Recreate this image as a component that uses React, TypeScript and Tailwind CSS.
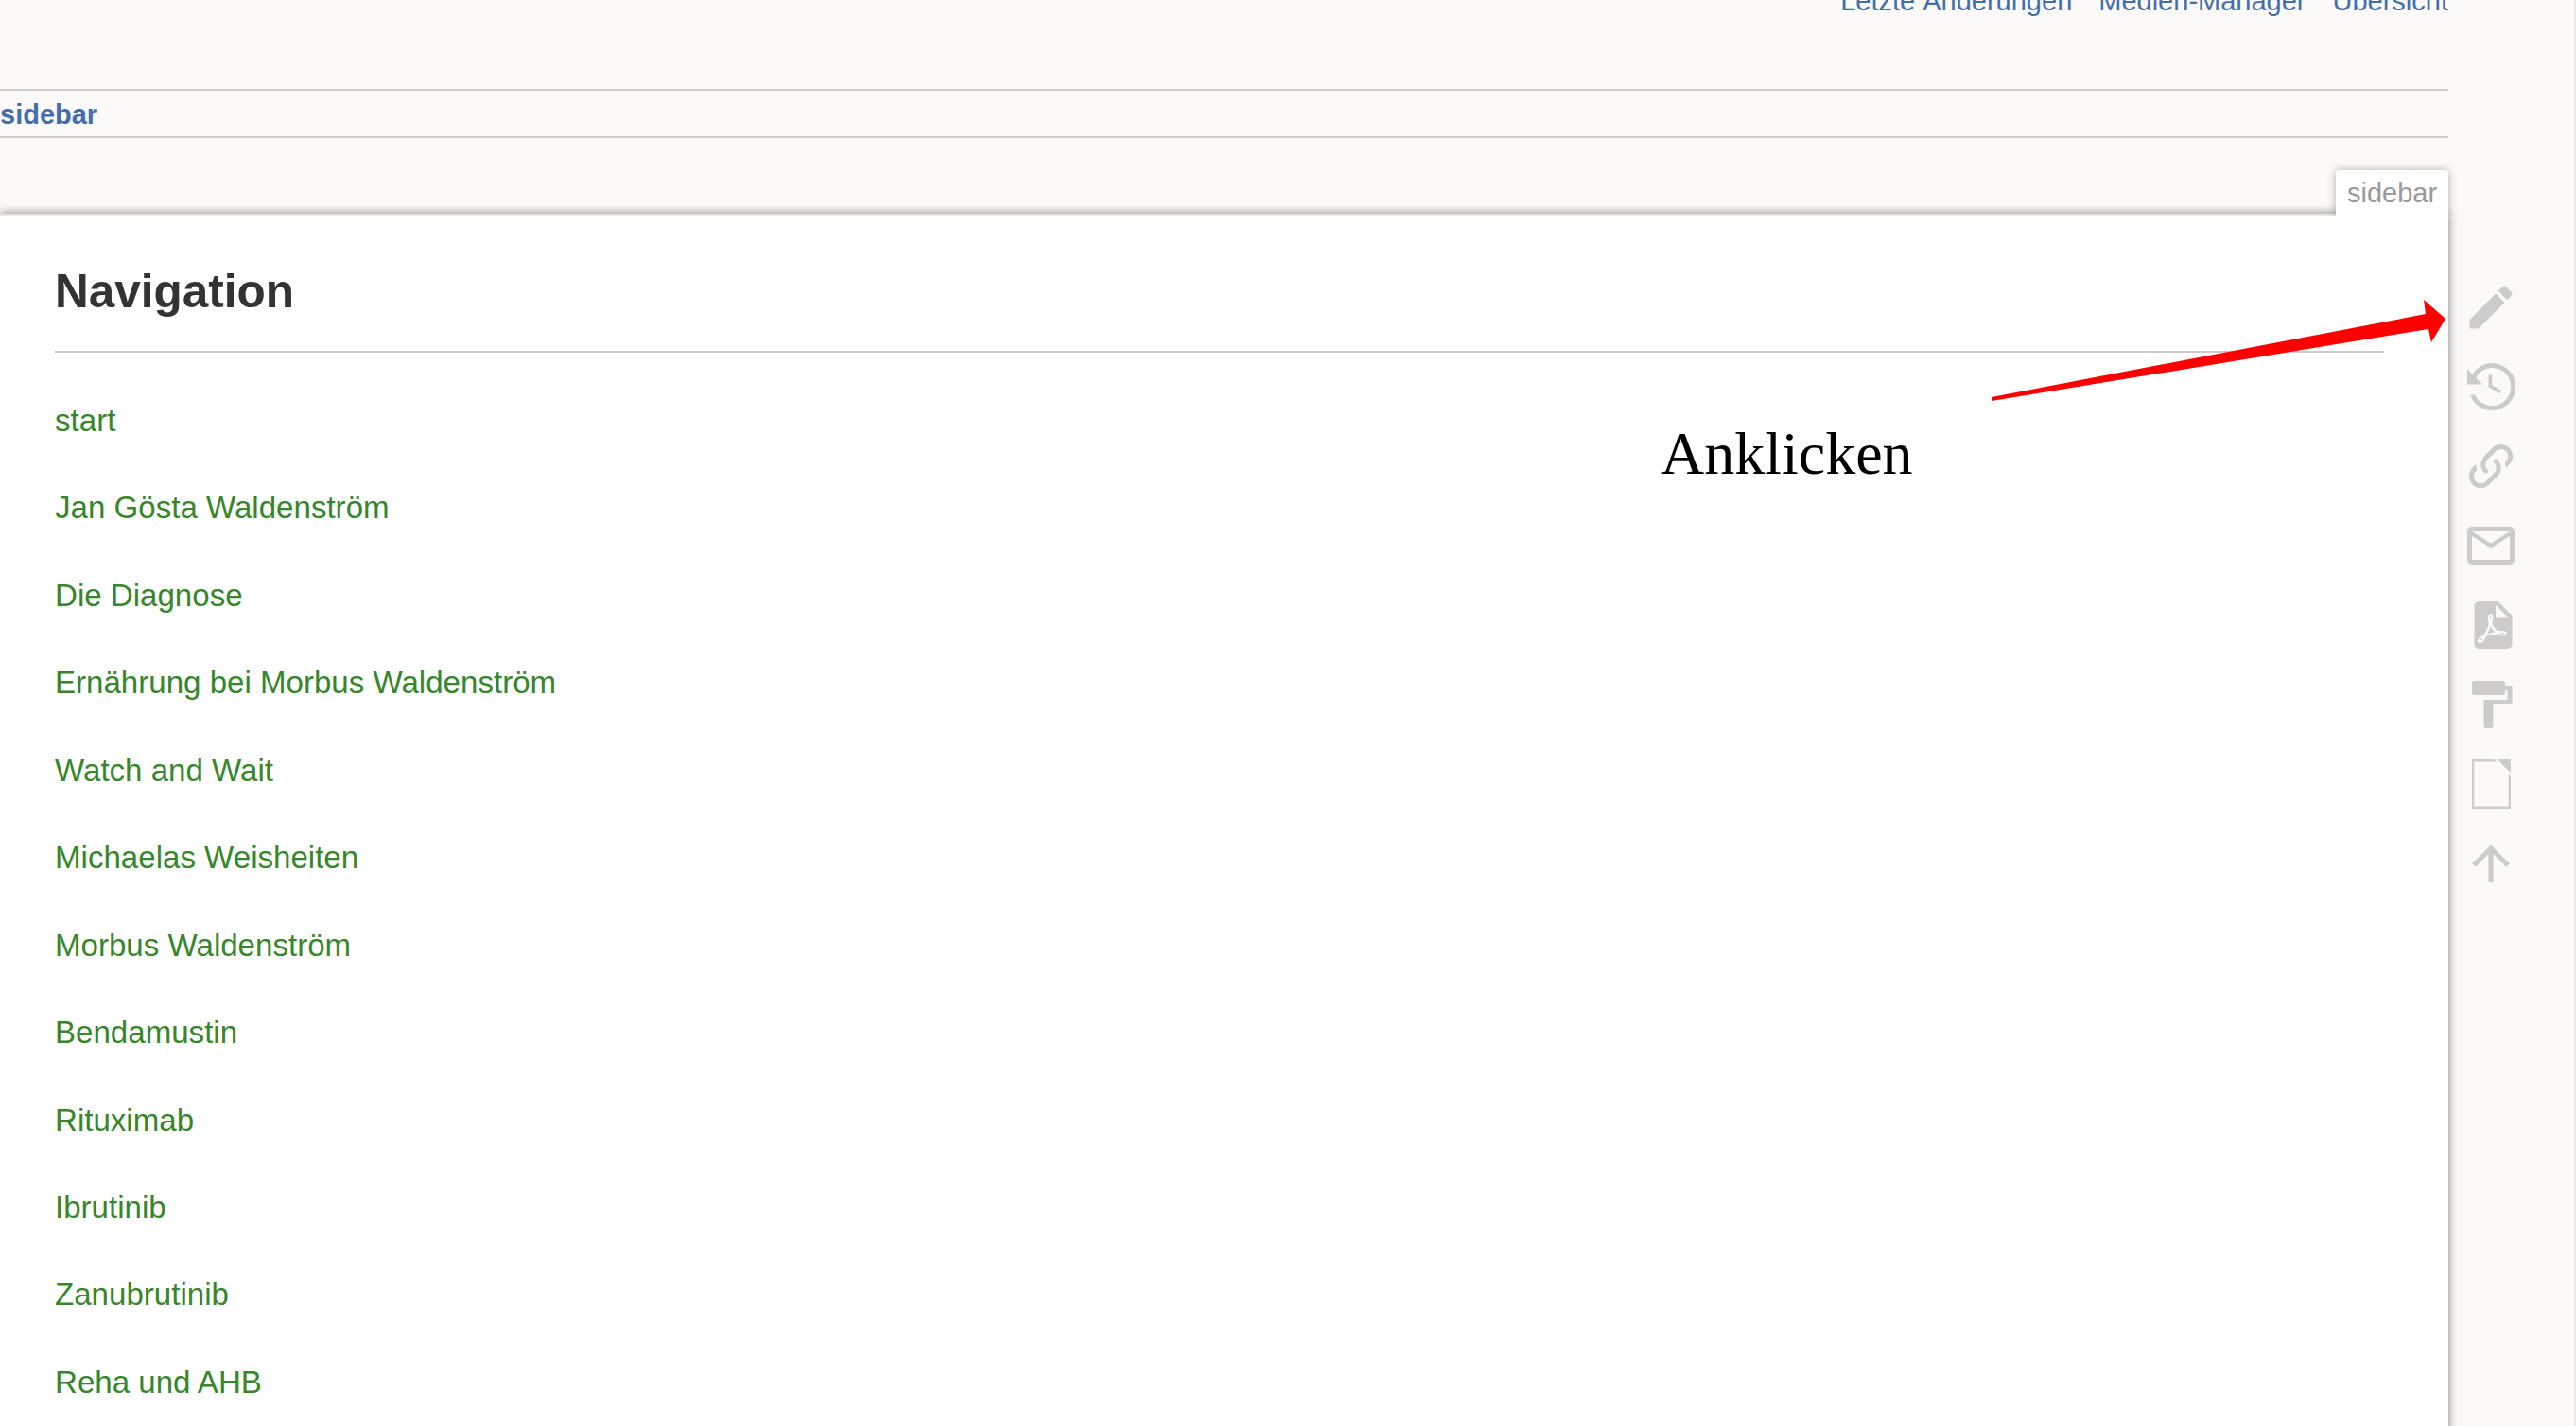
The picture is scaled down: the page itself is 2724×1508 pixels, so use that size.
const navLinks = [
  "start",
  "Jan Gösta Waldenström",
  "Die Diagnose",
  "Ernährung bei Morbus Waldenström",
  "Watch and Wait",
  "Michaelas Weisheiten",
  "Morbus Waldenström",
  "Bendamustin",
  "Rituximab",
  "Ibrutinib",
  "Zanubrutinib",
  "Reha und AHB",
];

const iconPaths = [
  // edit
  "M20.71,7.04C21.1,6.65 21.1,6 20.71,5.63L18.37,3.29C18,2.9 17.35,2.9 16.96,3.29L15.12,5.12L18.87,8.87M3,17.25V21H6.75L17.81,9.93L14.06,6.18L3,17.25Z",
  // old revisions
  "M11,7V12.11L15.71,14.9L16.5,13.62L12.5,11.25V7M12.5,2C8.97,2 5.91,3.92 4.27,6.77L2,4.5V11H8.5L5.75,8.25C6.96,5.73 9.5,4 12.5,4A8,8 0 0,1 20.5,12A8,8 0 0,1 12.5,20C9.21,20 6.39,18 5.17,15.15L3.34,15.9C4.87,19.5 8.39,22 12.5,22A10,10 0 0,0 22.5,12A10,10 0 0,0 12.5,2Z",
  // backlinks
  "M10.59,13.41C11,13.8 11,14.44 10.59,14.83C10.2,15.22 9.56,15.22 9.17,14.83C7.22,12.88 7.22,9.71 9.17,7.76V7.76L12.71,4.22C14.66,2.27 17.83,2.27 19.78,4.22C21.73,6.17 21.73,9.34 19.78,11.29L18.29,12.78C18.3,11.96 18.17,11.14 17.89,10.36L18.36,9.88C19.54,8.71 19.54,6.81 18.36,5.64C17.19,4.46 15.29,4.46 14.12,5.64L10.59,9.17C9.41,10.34 9.41,12.24 10.59,13.41M13.41,9.17C13.8,8.78 14.44,8.78 14.83,9.17C16.78,11.12 16.78,14.29 14.83,16.24V16.24L11.29,19.78C9.34,21.73 6.17,21.73 4.22,19.78C2.27,17.83 2.27,14.66 4.22,12.71L5.71,11.22C5.7,12.04 5.83,12.86 6.11,13.65L5.64,14.12C4.46,15.29 4.46,17.19 5.64,18.36C6.81,19.54 8.71,19.54 9.88,18.36L13.41,14.83C14.59,13.66 14.59,11.76 13.41,10.59C13,10.2 13,9.56 13.41,9.17Z",
  // mail
  "M22 6C22 4.9 21.1 4 20 4H4C2.9 4 2 4.9 2 6V18C2 19.1 2.9 20 4 20H20C21.1 20 22 19.1 22 18V6M20 6L12 11L4 6H20M20 18H4V8L12 13L20 8V18Z",
  // pdf
  "M14,9H19.5L14,3.5V9M7,2H15L21,8V20A2,2 0 0,1 19,22H7C5.89,22 5,21.1 5,20V4A2,2 0 0,1 7,2M11.93,12.44C12.34,13.34 12.86,14.08 13.46,14.59L13.87,14.91C13,15.07 11.8,15.35 10.53,15.84V15.84L10.42,15.88L10.92,14.84C11.37,13.97 11.7,13.18 11.93,12.44M18.41,16.25C18.59,16.07 18.68,15.84 18.69,15.59C18.72,15.39 18.67,15.2 18.57,15.04C18.28,14.57 17.53,14.35 16.29,14.35L15,14.42L14.13,13.84C13.5,13.32 12.93,12.41 12.53,11.28L12.57,11.14C12.9,9.81 13.21,8.2 12.55,7.54C12.39,7.38 12.17,7.3 11.94,7.3H11.7C11.33,7.3 11,7.69 10.91,8.07C10.54,9.4 10.76,10.13 11.13,11.34V11.35C10.88,12.23 10.56,13.25 10.05,14.28L9.09,16.08L8.2,16.57C7,17.32 6.43,18.16 6.32,18.69C6.28,18.88 6.3,19.05 6.37,19.23L6.4,19.28L6.88,19.59L7.32,19.7C8.13,19.7 9.05,18.75 10.29,16.63L10.47,16.56C11.5,16.23 12.78,16 14.5,15.81C15.53,16.32 16.74,16.55 17.5,16.55C17.94,16.55 18.24,16.44 18.41,16.25M18,15.54L18.09,15.65C18.08,15.75 18.05,15.76 18,15.78H17.96L17.77,15.8C17.31,15.8 16.6,15.61 15.87,15.29C15.96,15.19 16,15.19 16.1,15.19C17.5,15.19 17.9,15.44 18,15.54M8.83,17C8.18,18.19 7.59,18.85 7.14,19C7.19,18.62 7.64,17.96 8.35,17.31L8.83,17M11.85,10.09C11.62,9.19 11.61,8.46 11.78,8.04L11.85,7.92L12,7.97C12.17,8.21 12.19,8.53 12.09,9.07L12.06,9.23L11.9,10.09H11.85Z",
  // paint roller
  "M18,4V3A1,1 0 0,0 17,2H5A1,1 0 0,0 4,3V7A1,1 0 0,0 5,8H17A1,1 0 0,0 18,7V6H19V10H9V21A1,1 0 0,0 10,22H12A1,1 0 0,0 13,21V12H21V4H18Z",
  // odt export
  "M4,1.6H13.4L14.4,2.6H4.9V21.4H19.5V7.8L20.4,8.7V22A.4.4 0 0 1 20,22.4H4.4A.4.4 0 0 1 4,22ZM14.7,1.6H20.4V7.3Z",
  // back to top
  "M13,20H11V8L5.5,13.5L4.08,12.08L12,4.16L19.92,12.08L18.5,13.5L13,8V20Z",
];

export default function App() {
  return (
    <div className="relative flex h-[1508px] w-[2724px] overflow-hidden bg-[#fbfaf9] font-['Liberation_Sans',Arial,sans-serif]">
      {/* Wiki column */}
      <div className="flex w-[2589px] shrink-0 flex-col">
        <div className="flex h-[96px] shrink-0 justify-end gap-[28px] border-b-2 border-[#ccc] text-[29px] leading-[33px] text-[#436eac]">
          <a className="-mt-[15px]">Letzte Änderungen</a>
          <a className="-mt-[15px]">Medien-Manager</a>
          <a className="-mt-[15px]">Übersicht</a>
        </div>
        <div className="flex h-[50px] shrink-0 items-center border-b-2 border-[#ccc] pt-[3px] text-[29px] font-bold leading-[33px] text-[#436eac]">
          sidebar
        </div>
        <div className="flex h-[80px] shrink-0 items-end justify-end">
          <div className="relative z-10 -mb-[2px] flex h-[48px] w-[119px] items-center justify-center rounded-t-[3px] bg-white pt-[1px] text-[29px] text-[#999] shadow-[0_0_10px_rgba(0,0,0,0.3)] [clip-path:inset(-12px_-12px_0_-12px)]">
            sidebar
          </div>
        </div>
        <div className="relative flex-1 border-t-2 border-[#e8e8e8] bg-white pl-[58px] pr-[68px] shadow-[0_0_10px_rgba(0,0,0,0.5)]">
          <h1 className="mt-[46px] border-b-2 border-[#ccc] pb-[29px] text-[49.5px] font-bold leading-[68px] text-[#333]">
            Navigation
          </h1>
          <ul className="mt-[49px] flex flex-col">
            {navLinks.map((link) => (
              <li key={link} className="h-[92.45px] text-[33.1px] leading-[46px] text-[#37862b]">
                {link}
              </li>
            ))}
          </ul>
        </div>
      </div>

      {/* Page tools */}
      <div className="flex flex-1 flex-col items-center pr-[43px] pt-[283px]">
        {iconPaths.map((d, idx) => (
          <div key={idx} className="flex h-[84px] w-[60px] shrink-0 items-center justify-center">
            <svg viewBox="0 0 24 24" className="h-[60px] w-[60px] fill-[#ccc]">
              <path d={d} />
            </svg>
          </div>
        ))}
      </div>
      <div className="w-[2px] shrink-0 bg-[#e8e8e8]" />

      {/* Screenshot annotation */}
      <svg className="absolute left-[2100px] top-[310px] h-[120px] w-[490px]" viewBox="2100 310 490 120">
        <polygon points="2106,420 2565,332 2563,317 2586,337 2571,362 2568,348 2106,424" fill="#fe0000" />
      </svg>
      <div className="absolute left-[1756px] top-[443px] font-['Liberation_Serif',serif] text-[64px] leading-[73px] text-black">
        Anklicken
      </div>
    </div>
  );
}
